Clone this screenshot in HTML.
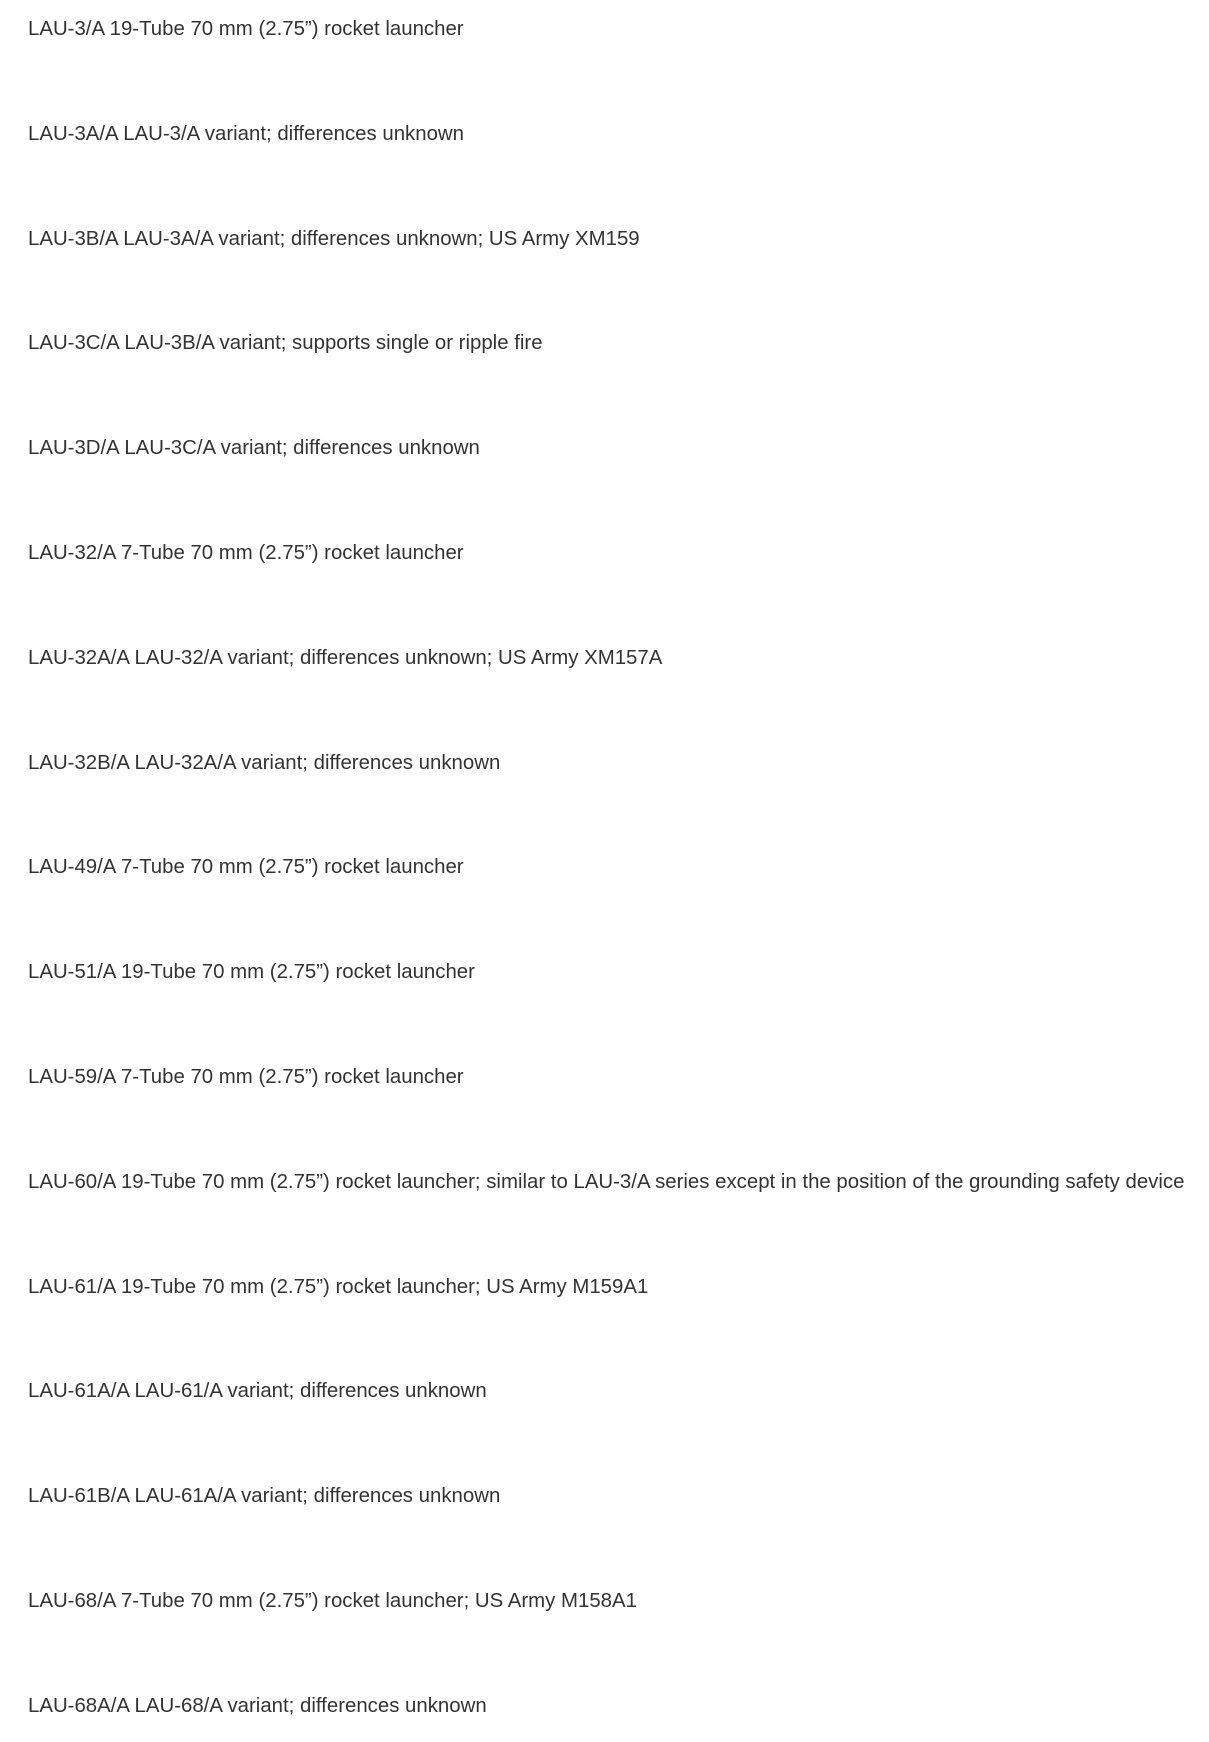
<!DOCTYPE html>
<html><head><meta charset="utf-8"><style>
html,body{margin:0;padding:0;background:#fff;width:1209px;height:1742px;overflow:hidden;}
div{position:absolute;left:28px;height:24px;line-height:24px;font-family:"Liberation Sans",Arial,sans-serif;font-size:20.4px;color:#333;white-space:nowrap;}
</style></head><body>
<div style="top:17px">LAU-3/A 19-Tube 70 mm (2.75”) rocket launcher</div>
<div style="top:122px">LAU-3A/A LAU-3/A variant; differences unknown</div>
<div style="top:227px">LAU-3B/A LAU-3A/A variant; differences unknown; US Army XM159</div>
<div style="top:331px">LAU-3C/A LAU-3B/A variant; supports single or ripple fire</div>
<div style="top:436px">LAU-3D/A LAU-3C/A variant; differences unknown</div>
<div style="top:541px">LAU-32/A 7-Tube 70 mm (2.75”) rocket launcher</div>
<div style="top:646px">LAU-32A/A LAU-32/A variant; differences unknown; US Army XM157A</div>
<div style="top:751px">LAU-32B/A LAU-32A/A variant; differences unknown</div>
<div style="top:855px">LAU-49/A 7-Tube 70 mm (2.75”) rocket launcher</div>
<div style="top:960px">LAU-51/A 19-Tube 70 mm (2.75”) rocket launcher</div>
<div style="top:1065px">LAU-59/A 7-Tube 70 mm (2.75”) rocket launcher</div>
<div style="top:1170px">LAU-60/A 19-Tube 70 mm (2.75”) rocket launcher; similar to LAU-3/A series except in the position of the grounding safety device</div>
<div style="top:1275px">LAU-61/A 19-Tube 70 mm (2.75”) rocket launcher; US Army M159A1</div>
<div style="top:1379px">LAU-61A/A LAU-61/A variant; differences unknown</div>
<div style="top:1484px">LAU-61B/A LAU-61A/A variant; differences unknown</div>
<div style="top:1589px">LAU-68/A 7-Tube 70 mm (2.75”) rocket launcher; US Army M158A1</div>
<div style="top:1694px">LAU-68A/A LAU-68/A variant; differences unknown</div>
</body></html>
